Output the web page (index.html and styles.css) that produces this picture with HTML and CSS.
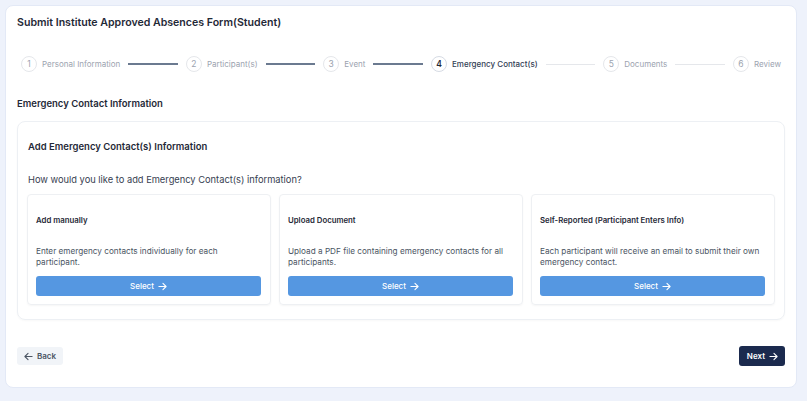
FILE: index.html
```
<!DOCTYPE html>
<html lang="en">
<head>
    <meta charset="UTF-8">
    <meta name="viewport" content="width=device-width, initial-scale=1.0">
    <title>Institute Approved Absences</title>
    <link rel="stylesheet" href="styles.css">
</head>
<body>
  <div class="pagina">
    <div class="cartao">
      <h1 class="titulo">Submit Institute Approved Absences Form(Student)</h1>

      <div class="stepper">
        <div class="passo feito"><span class="circulo">1</span><span class="rotulo">Personal Information</span></div>
        <div class="linha feita"></div>
        <div class="passo feito"><span class="circulo">2</span><span class="rotulo">Participant(s)</span></div>
        <div class="linha feita"></div>
        <div class="passo feito"><span class="circulo">3</span><span class="rotulo">Event</span></div>
        <div class="linha feita"></div>
        <div class="passo ativo"><span class="circulo">4</span><span class="rotulo">Emergency Contact(s)</span></div>
        <div class="linha"></div>
        <div class="passo"><span class="circulo">5</span><span class="rotulo">Documents</span></div>
        <div class="linha"></div>
        <div class="passo"><span class="circulo">6</span><span class="rotulo">Review</span></div>
      </div>

      <h2 class="secao">Emergency Contact Information</h2>

      <div class="caixa">
        <h3 class="caixa-titulo">Add Emergency Contact(s) Information</h3>
        <p class="pergunta">How would you like to add Emergency Contact(s) information?</p>

        <div class="opcoes">
          <div class="opcao">
            <h4>Add manually</h4>
            <p>Enter emergency contacts individually for each participant.</p>
            <button class="btn-select">Select
              <svg width="9" height="9" viewBox="0 0 10 10"><path d="M1 5h8M5.5 1.5L9 5l-3.5 3.5" fill="none" stroke="#fff" stroke-width="1.2" stroke-linecap="round" stroke-linejoin="round"/></svg>
            </button>
          </div>
          <div class="opcao">
            <h4>Upload Document</h4>
            <p>Upload a PDF file containing emergency contacts for all participants.</p>
            <button class="btn-select">Select
              <svg width="9" height="9" viewBox="0 0 10 10"><path d="M1 5h8M5.5 1.5L9 5l-3.5 3.5" fill="none" stroke="#fff" stroke-width="1.2" stroke-linecap="round" stroke-linejoin="round"/></svg>
            </button>
          </div>
          <div class="opcao">
            <h4>Self-Reported (Participant Enters Info)</h4>
            <p>Each participant will receive an email to submit their own emergency contact.</p>
            <button class="btn-select">Select
              <svg width="9" height="9" viewBox="0 0 10 10"><path d="M1 5h8M5.5 1.5L9 5l-3.5 3.5" fill="none" stroke="#fff" stroke-width="1.2" stroke-linecap="round" stroke-linejoin="round"/></svg>
            </button>
          </div>
        </div>
      </div>

      <div class="rodape">
        <button class="btn-back">
          <svg width="9" height="9" viewBox="0 0 10 10"><path d="M9 5H1M4.5 1.5L1 5l3.5 3.5" fill="none" stroke="#4b5563" stroke-width="1.2" stroke-linecap="round" stroke-linejoin="round"/></svg>
          Back
        </button>
        <button class="btn-next">Next
          <svg width="9" height="9" viewBox="0 0 10 10"><path d="M1 5h8M5.5 1.5L9 5l-3.5 3.5" fill="none" stroke="#fff" stroke-width="1.2" stroke-linecap="round" stroke-linejoin="round"/></svg>
        </button>
      </div>
    </div>
  </div>
</body>
</html>
```

FILE: styles.css
```
*{
  margin: 0;
  padding: 0;
  box-sizing: border-box;
}

body{
  background-color: #eef2fb;
  color: #1f2937;
  font-family: Inter, "Noto Sans", sans-serif;
}

.pagina{
  padding: 5px 10px 13px 5px;
}

.cartao{
  background-color: #fff;
  border: 1px solid #e3e9f6;
  border-radius: 8px;
  padding: 10px 11px 21px 11px;
}

.titulo{
  font-size: 10.6px;
  line-height: 14px;
  font-weight: 600;
  color: #1f2937;
}

.stepper{
  display: flex;
  align-items: center;
  margin-top: 26px;
  padding: 0 4px;
}

.passo{
  display: flex;
  align-items: center;
  column-gap: 5px;
}

.circulo{
  width: 16px;
  height: 16px;
  border-radius: 50%;
  border: 1px solid #e5e7eb;
  display: flex;
  align-items: center;
  justify-content: center;
  font-size: 8.5px;
  color: #9ca3af;
}

.rotulo{
  font-size: 8px;
  color: #9ca3af;
  white-space: nowrap;
}

.passo.ativo .circulo{
  border-color: #d6dbe4;
  color: #1f2937;
  font-weight: 600;
}

.passo.ativo .rotulo{
  color: #334155;
  font-weight: 500;
}

.linha{
  flex: 1;
  height: 1px;
  background-color: #e5e7eb;
  margin: 0 8px;
}

.linha.feita{
  height: 2px;
  background-color: #6b7a90;
}

.secao{
  font-size: 9.5px;
  line-height: 12px;
  font-weight: 600;
  margin-top: 26px;
}

.caixa{
  margin-top: 11px;
  border: 1px solid #edf0f4;
  border-radius: 8px;
  padding: 18px 9px 14px 9px;
  box-shadow: 0 1px 2px rgba(0,0,0,0.03);
}

.caixa-titulo{
  font-size: 9.5px;
  line-height: 14px;
  font-weight: 600;
  padding-left: 1px;
}

.pergunta{
  font-size: 9.3px;
  line-height: 14px;
  color: #374151;
  margin-top: 19px;
  padding-left: 1px;
}

.opcoes{
  display: grid;
  grid-template-columns: 1fr 1fr 1fr;
  column-gap: 8px;
  margin-top: 7px;
}

.opcao{
  border: 1px solid #eef0f3;
  border-radius: 4px;
  padding: 19px 9px 8px 8px;
  box-shadow: 0 1px 2px rgba(0,0,0,0.04);
}

.opcao h4{
  font-size: 7.8px;
  line-height: 12px;
  font-weight: 600;
  color: #1f2937;
}

.opcao p{
  font-size: 8.2px;
  line-height: 11px;
  color: #4b5563;
  margin-top: 20px;
  height: 22px;
  padding-right: 2px;
}

.btn-select{
  margin-top: 8px;
  width: 100%;
  height: 20px;
  border: none;
  border-radius: 3px;
  background-color: #5597e1;
  color: #fff;
  font-family: inherit;
  font-size: 8px;
  font-weight: 500;
  display: flex;
  align-items: center;
  justify-content: center;
  column-gap: 4px;
}

.rodape{
  display: flex;
  justify-content: space-between;
  align-items: center;
  margin-top: 26px;
}

.btn-back, .btn-next{
  border: none;
  border-radius: 3px;
  font-family: inherit;
  font-size: 8px;
  font-weight: 600;
  display: flex;
  align-items: center;
  column-gap: 4px;
}

.btn-back{
  height: 18px;
  padding: 0 7px;
  background-color: #f1f4f8;
  color: #4b5563;
}

.btn-next{
  height: 20px;
  padding: 0 7px 0 8px;
  background-color: #1b2a4e;
  color: #fff;
}
```
